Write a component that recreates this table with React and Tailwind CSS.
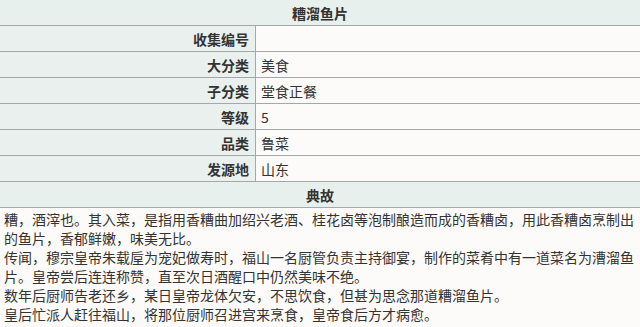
import React from "react";

const rows = [
	["收集编号", ""],
	["大分类", "美食"],
	["子分类", "堂食正餐"],
	["等级", "5"],
	["品类", "鲁菜"],
	["发源地", "山东"],
];

const story = [
	"糟，酒滓也。其入菜，是指用香糟曲加绍兴老酒、桂花卤等泡制酿造而成的香糟卤，用此香糟卤烹制出的鱼片，香郁鲜嫩，味美无比。",
	"传闻，穆宗皇帝朱载垕为宠妃做寿时，福山一名厨管负责主持御宴，制作的菜肴中有一道菜名为漕溜鱼片。皇帝尝后连连称赞，直至次日酒醒口中仍然美味不绝。",
	"数年后厨师告老还乡，某日皇帝龙体欠安，不思饮食，但甚为思念那道糟溜鱼片。",
	"皇后忙派人赶往福山，将那位厨师召进宫来烹食，皇帝食后方才病愈。",
];

export default function App() {
	return (
		<div
			className="w-[640px] h-[327px] overflow-hidden bg-[#fdfbfa] text-[#333] text-[14px]"
			style={{ fontFamily: '"Noto Sans CJK SC", "Noto Sans", sans-serif' }}>
			<div className="h-[26px] flex items-center justify-center bg-[#e8f0ee] border-b border-[#a3a9ab] font-bold leading-none">
				糟溜鱼片
			</div>
			{rows.map(([label, value], index) => (
				<div key={index} className="h-[26px] flex border-b border-[#a3a9ab]">
					<div className="w-[256px] shrink-0 flex items-center justify-end pr-[6px] bg-[#eaf0ee] border-r border-[#a3a9ab] font-bold leading-none">
						{label}
					</div>
					<div className="flex-1 flex items-center pl-[5px] leading-none">{value}</div>
				</div>
			))}
			<div className="h-[26px] flex items-center justify-center bg-[#e8f0ee] border-b border-[#a3a9ab] font-bold leading-none">
				典故
			</div>
			<div className="px-[4px] pt-[2px] leading-[19px]">
				{story.map((line, index) => (
					<p key={index}>{line}</p>
				))}
			</div>
		</div>
	);
}
